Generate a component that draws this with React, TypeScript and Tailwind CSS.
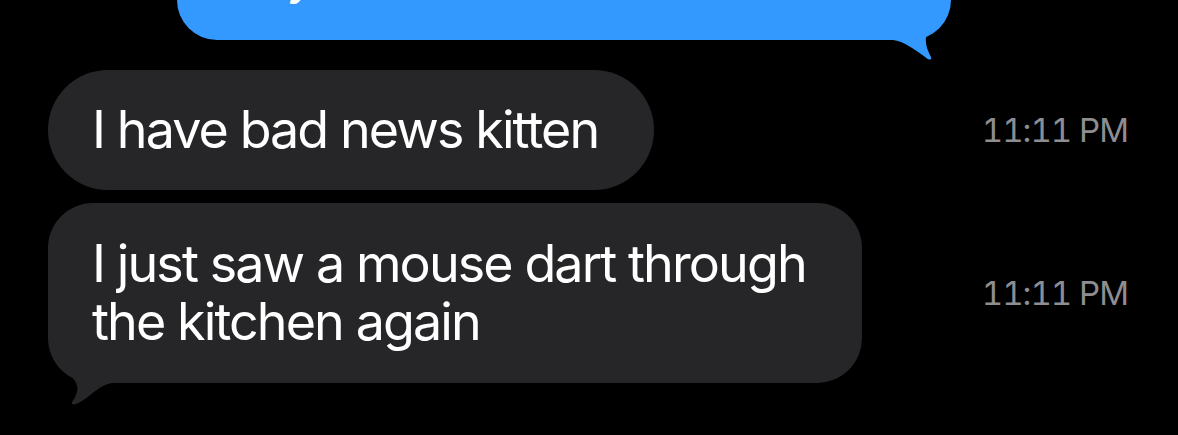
const font = { fontFamily: "Inter, 'Noto Sans', sans-serif" };

function SentTail() {
  return (
    <svg
      className="absolute right-0 bottom-[-25px] w-[70px] h-[85px]"
      viewBox="-70 -60 70 85"
      fill="#3399fe"
    >
      <path d="M-70 0 L-58 0 C-48 1 -35 10 -24 18.5 C-22.5 19.8 -19.5 20.5 -19.8 17.5 C-22 13 -26 6 -25 -3 C-24 -13 -14 -21 -8 -26 C-3 -31 0 -36 0 -45 L0 -60 L-70 -60 Z" />
    </svg>
  );
}

function ReceivedTail() {
  return (
    <svg
      className="absolute left-0 bottom-[-25px] w-[90px] h-[85px]"
      viewBox="0 -60 90 85"
      fill="#262628"
    >
      <path d="M0 -60 L0 -48 C3 -36 9 -24 18 -13 C26 -5 31 2 29 9 C28 13 26 16 24 19 C23 21 25 22 28 21 C40 17 48 3 64 0 L90 0 L90 -60 Z" />
    </svg>
  );
}

function Time() {
  return (
    <span className="ml-auto mr-[50px] text-[33px] text-[#8d8d92] leading-none tabular-nums tracking-[-1px]">
      11:11 PM
    </span>
  );
}

export default function App() {
  return (
    <div
      className="w-full h-[435px] bg-black overflow-hidden flex flex-col"
      style={font}
    >
      {/* sent bubble, cut off at the top */}
      <div className="pl-[177px]">
        <div className="relative w-[774px] mt-[-80px] bg-[#3399fe] rounded-[40px] pl-[64px] pt-[26px] pb-[36px] text-white text-[52px] leading-[58px] tracking-[-1.9px]">
          <SentTail />
          <span className="relative">My</span>
        </div>
      </div>

      <div className="flex items-center mt-[30px]">
        <div className="ml-[48px] bg-[#262628] rounded-full pl-[44px] pr-[56px] py-[31px] text-white text-[52px] leading-[58px] tracking-[-1.9px]">
          I have bad news kitten
        </div>
        <Time />
      </div>

      <div className="flex items-center mt-[13px]">
        <div className="relative ml-[48px] bg-[#262628] rounded-[45px] pl-[44px] pr-[56px] py-[32px] text-white text-[52px] leading-[58px] tracking-[-1.9px]">
          <ReceivedTail />
          <span className="relative">
            I just saw a mouse dart through
            <br />
            the kitchen again
          </span>
        </div>
        <Time />
      </div>
    </div>
  );
}
